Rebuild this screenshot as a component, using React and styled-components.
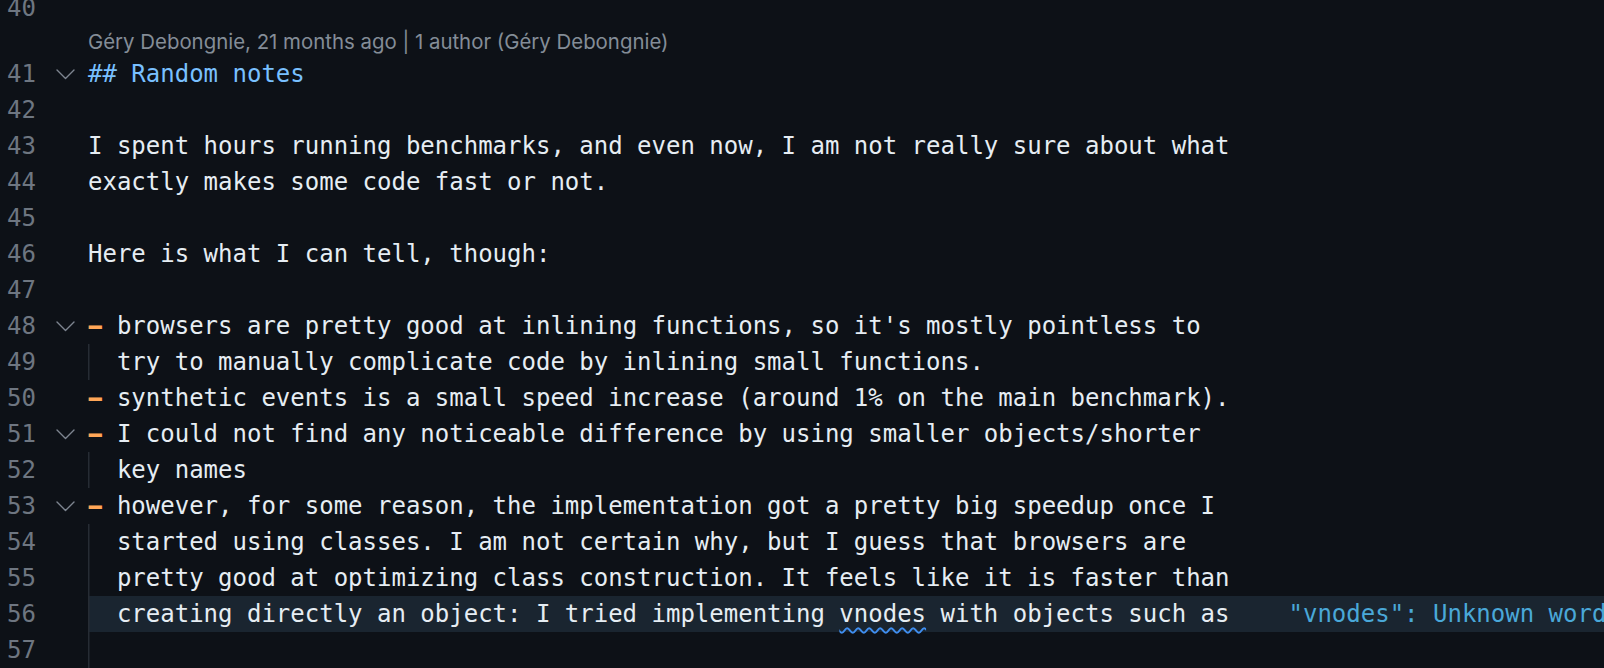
import React from 'react';
import styled, { createGlobalStyle, css } from 'styled-components';

const GlobalStyle = createGlobalStyle`
  html, body {
    margin: 0;
    padding: 0;
    background: #0d1117;
  }
`;

const Editor = styled.div`
  width: 1604px;
  height: 668px;
  overflow: hidden;
  background: #0d1117;
  font-family: 'DejaVu Sans Mono', 'Liberation Mono', monospace;
  font-size: 24px;
  color: #e6edf3;
`;

const Lines = styled.div`
  margin-top: -10px;
  display: flex;
  flex-direction: column;
`;

const Row = styled.div`
  display: flex;
  height: 36px;
  line-height: 36px;
  white-space: pre;
`;

const LineNo = styled.span`
  width: 36px;
  text-align: right;
  color: #6e7681;
  flex-shrink: 0;
`;

const Fold = styled.span`
  width: 52px;
  height: 36px;
  flex-shrink: 0;
  display: flex;
  align-items: center;
  justify-content: center;
  padding-left: 6px;
  box-sizing: border-box;
`;

const Content = styled.div`
  flex: 1;
  height: 36px;
  ${props =>
    props.guide &&
    css`
      box-shadow: inset 1.5px 0 0 #262c34;
    `}
  ${props =>
    props.active &&
    css`
      background: #1a2530;
    `}
`;

const CodeLens = styled.div`
  height: 30px;
  display: flex;
  align-items: center;
  padding-left: 88px;
  font-family: Inter, 'Noto Sans', sans-serif;
  font-size: 20.4px;
  color: #848d97;
  white-space: pre;
`;

const Heading = styled.span`
  color: #79c0ff;
`;

const Dash = styled.span`
  display: inline-block;
  color: #ffa657;
  font-weight: bold;
  transform: scaleX(1.8);
`;

const Squiggle = styled.span`
  text-decoration: underline wavy #3f8ef0;
  text-decoration-thickness: 2px;
  text-underline-offset: 5px;
`;

const Hint = styled.span`
  color: #4aa8d8;
  margin-left: 59px;
`;

const Chevron = () => (
  <svg width="19" height="11" viewBox="0 0 19 11" fill="none">
    <polyline
      points="1,1 9.5,9.5 18,1"
      stroke="#7d8590"
      strokeWidth="1.4"
      strokeLinecap="round"
      strokeLinejoin="round"
    />
  </svg>
);

const Line = ({ n, fold, guide, active, children }) => (
  <Row>
    <LineNo>{n}</LineNo>
    <Fold>{fold && <Chevron />}</Fold>
    <Content guide={guide} active={active}>
      {children}
    </Content>
  </Row>
);

const Item = ({ children }) => (
  <>
    <Dash>-</Dash>
    {' '}
    {children}
  </>
);

const App = () => (
  <>
    <GlobalStyle />
    <Editor>
      <Lines>
        <Line n={40} />
        <CodeLens>Géry Debongnie, 21 months ago | 1 author (Géry Debongnie)</CodeLens>
        <Line n={41} fold>
          <Heading>## Random notes</Heading>
        </Line>
        <Line n={42} />
        <Line n={43}>
          I spent hours running benchmarks, and even now, I am not really sure about what
        </Line>
        <Line n={44}>exactly makes some code fast or not.</Line>
        <Line n={45} />
        <Line n={46}>Here is what I can tell, though:</Line>
        <Line n={47} />
        <Line n={48} fold>
          <Item>browsers are pretty good at inlining functions, so it's mostly pointless to</Item>
        </Line>
        <Line n={49} guide>
          {'  try to manually complicate code by inlining small functions.'}
        </Line>
        <Line n={50}>
          <Item>synthetic events is a small speed increase (around 1% on the main benchmark).</Item>
        </Line>
        <Line n={51} fold>
          <Item>I could not find any noticeable difference by using smaller objects/shorter</Item>
        </Line>
        <Line n={52} guide>
          {'  key names'}
        </Line>
        <Line n={53} fold>
          <Item>however, for some reason, the implementation got a pretty big speedup once I</Item>
        </Line>
        <Line n={54} guide>
          {'  started using classes. I am not certain why, but I guess that browsers are'}
        </Line>
        <Line n={55} guide>
          {'  pretty good at optimizing class construction. It feels like it is faster than'}
        </Line>
        <Line n={56} guide active>
          {'  creating directly an object: I tried implementing '}
          <Squiggle>vnodes</Squiggle>
          {' with objects such as'}
          <Hint>"vnodes": Unknown word</Hint>
        </Line>
        <Line n={57} guide />
      </Lines>
    </Editor>
  </>
);

export default App;
